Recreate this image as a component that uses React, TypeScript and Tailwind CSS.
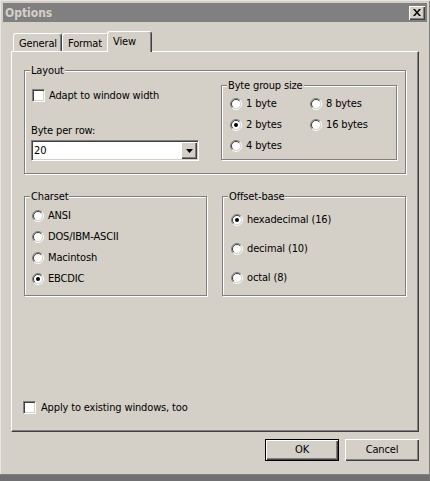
import React from "react";

// classic 3d radio bullet
function Radio({ checked = false }: { checked?: boolean }) {
  return (
    <svg width="12" height="12" viewBox="0 0 12 12" className="shrink-0">
      <circle cx="6" cy="6" r="4.5" fill="#fff" />
      <path d="M2.1 9.9 A5.5 5.5 0 0 1 9.9 2.1" fill="none" stroke="#808080" />
      <path d="M9.9 2.1 A5.5 5.5 0 0 1 2.1 9.9" fill="none" stroke="#fff" />
      <path d="M2.8 9.2 A4.5 4.5 0 0 1 9.2 2.8" fill="none" stroke="#404040" />
      <path d="M9.2 2.8 A4.5 4.5 0 0 1 2.8 9.2" fill="none" stroke="#d4d0c8" />
      {checked && <circle cx="6" cy="6" r="2" fill="#000" />}
    </svg>
  );
}

function CheckBox() {
  return (
    <span className="block h-[13px] w-[13px] shrink-0 border border-t-[#808080] border-l-[#808080] border-r-white border-b-white bg-white shadow-[inset_1px_1px_0_#404040,inset_-1px_-1px_0_#d4d0c8]" />
  );
}

function GroupBox({
  title,
  className = "",
  children,
}: {
  title: string;
  className?: string;
  children: React.ReactNode;
}) {
  return (
    <div
      className={`relative border border-[#808080] shadow-[inset_1px_1px_0_#fff,1px_1px_0_#fff] ${className}`}
    >
      <span className="absolute -top-[7px] left-[5px] bg-[#d4d0c8] px-px leading-[13px]">
        {title}
      </span>
      {children}
    </div>
  );
}

function RadioItem({ label, checked }: { label: string; checked?: boolean }) {
  return (
    <div className="flex items-center gap-[4px]">
      <Radio checked={checked} />
      <span className="leading-[13px]">{label}</span>
    </div>
  );
}

function Tab({ label, active = false, width }: { label: string; active?: boolean; width: string }) {
  if (active) {
    return (
      <div
        className={`relative z-10 -mb-px -ml-[2px] h-[21px] ${width} rounded-t-[3px] border-l border-t border-l-white border-t-white border-r border-r-[#404040] bg-[#d4d0c8] pl-[5px] pt-[3px] leading-[13px] shadow-[inset_-1px_0_0_#808080]`}
      >
        {label}
      </div>
    );
  }
  return (
    <div
      className={`h-[18px] ${width} rounded-t-[3px] border-l border-t border-l-white border-t-white border-r border-r-[#404040] pl-[5px] pt-[3px] leading-[13px] shadow-[inset_-1px_0_0_#808080]`}
    >
      {label}
    </div>
  );
}

function Button({ label, isDefault = false }: { label: string; isDefault?: boolean }) {
  return (
    <div
      className={`h-[22px] w-[74px] ${isDefault ? "border border-black" : ""}`}
    >
      <div className="flex h-full w-full items-center justify-center shadow-[inset_1px_1px_0_#fff,inset_-1px_-1px_0_#404040,inset_-2px_-2px_0_#808080]">
        {label}
      </div>
    </div>
  );
}

export default function App() {
  return (
    <div className="flex h-[481px] w-[430px] flex-col bg-[#d4d0c8] font-['DejaVu_Sans_Condensed','Liberation_Sans',sans-serif] text-[11px] tracking-[-0.15px] text-black shadow-[inset_1px_1px_0_#e8e6e0,inset_-1px_0_0_#808080]">
      {/* title bar */}
      <div className="mx-[3px] mt-[3px] flex h-[19px] items-center justify-between bg-[#808080] pl-[2px] pr-[2px]">
        <span className="font-bold text-[12px] tracking-normal text-[#d4d0c8]">Options</span>
        <div className="flex h-[14px] w-[16px] items-center justify-center bg-[#d4d0c8] shadow-[inset_1px_1px_0_#fff,inset_-1px_-1px_0_#404040,inset_-2px_-2px_0_#808080]">
          <svg width="8" height="7" viewBox="0 0 8 7" className="-mt-px">
            <path d="M0 0h2l2 2.5L6 0h2L5 3.5 8 7H6L4 4.5 2 7H0l3-3.5z" fill="#000" />
          </svg>
        </div>
      </div>

      {/* tabs */}
      <div className="ml-[13px] mt-[9px] flex items-end">
        <Tab label="General" width="w-[49px]" />
        <Tab label="Format" width="w-[47px]" />
        <Tab label="View" active width="w-[45px]" />
      </div>

      {/* tab page */}
      <div className="mx-[11px] flex h-[381px] flex-col border border-l-white border-t-white border-r-[#404040] border-b-[#404040] px-[12px] pt-[18px] shadow-[inset_-1px_-1px_0_#808080]">
        <GroupBox title="Layout" className="flex h-[104px] justify-between">
          <div className="flex flex-col pl-[6px] pt-[18px]">
            <div className="ml-px flex items-center gap-[4px]">
              <CheckBox />
              <span className="leading-[13px]">Adapt to window width</span>
            </div>
            <span className="mt-[22px] leading-[13px]">Byte per row:</span>
            <div className="mt-[3px] flex h-[21px] w-[168px] items-center border border-t-[#808080] border-l-[#808080] border-r-white border-b-white bg-white shadow-[inset_1px_1px_0_#404040,inset_-1px_-1px_0_#d4d0c8]">
              <span className="flex-1 pl-[2px] leading-[13px]">20</span>
              <div className="mr-[1px] flex h-[17px] w-[16px] items-center justify-center bg-[#d4d0c8] shadow-[inset_1px_1px_0_#fff,inset_-1px_-1px_0_#404040,inset_-2px_-2px_0_#808080]">
                <svg width="7" height="4" viewBox="0 0 7 4">
                  <path d="M0 0h7L3.5 4z" fill="#000" />
                </svg>
              </div>
            </div>
          </div>

          <GroupBox title="Byte group size" className="mr-[8px] mt-[14px] h-[75px] w-[176px]">
            <div className="grid grid-cols-[80px_80px] auto-rows-[21px] items-center pl-[8px] pt-[7px]">
              <RadioItem label="1 byte" />
              <RadioItem label="8 bytes" />
              <RadioItem label="2 bytes" checked />
              <RadioItem label="16 bytes" />
              <RadioItem label="4 bytes" />
            </div>
          </GroupBox>
        </GroupBox>

        <div className="mt-[22px] flex gap-[15px]">
          <GroupBox title="Charset" className="h-[100px] w-[184px]">
            <div className="grid auto-rows-[21px] items-center pl-[7px] pt-[8px]">
              <RadioItem label="ANSI" />
              <RadioItem label="DOS/IBM-ASCII" />
              <RadioItem label="Macintosh" />
              <RadioItem label="EBCDIC" checked />
            </div>
          </GroupBox>
          <GroupBox title="Offset-base" className="h-[100px] w-[185px]">
            <div className="grid auto-rows-[29px] items-center pl-[8px] pt-[8px]">
              <RadioItem label="hexadecimal (16)" checked />
              <RadioItem label="decimal (10)" />
              <RadioItem label="octal (8)" />
            </div>
          </GroupBox>
        </div>

        <div className="-ml-px mt-auto mb-[17px] flex items-center gap-[5px]">
          <CheckBox />
          <span className="leading-[13px]">Apply to existing windows, too</span>
        </div>
      </div>

      {/* dialog buttons */}
      <div className="mr-[11px] mt-[7px] flex justify-end gap-[6px]">
        <Button label="OK" isDefault />
        <Button label="Cancel" />
      </div>

      <div className="mt-auto h-[7px] border-t border-t-[#808080] bg-[#707070]" />
    </div>
  );
}
